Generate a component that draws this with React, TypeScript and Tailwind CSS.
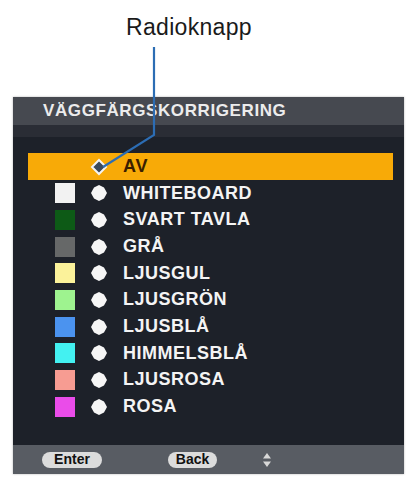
import React from "react";

const rows = [
  { label: "WHITEBOARD", color: "#f2f2f2" },
  { label: "SVART TAVLA", color: "#0d5a16" },
  { label: "GRÅ", color: "#666868" },
  { label: "LJUSGUL", color: "#fbf29a" },
  { label: "LJUSGRÖN", color: "#9ef38f" },
  { label: "LJUSBLÅ", color: "#4b93ef" },
  { label: "HIMMELSBLÅ", color: "#43f1f1" },
  { label: "LJUSROSA", color: "#f79c92" },
  { label: "ROSA", color: "#ea4ce9" },
];

const font = { fontFamily: "'Liberation Sans', Arial, sans-serif" };

function Dot() {
  return (
    <svg width="18" height="18" viewBox="0 0 18 18" className="shrink-0">
      <path d="M9 1 L14 3.5 L17 9 L14 14.5 L9 17 L4 14.5 L1 9 L4 3.5 Z" fill="#f6f6f6" />
    </svg>
  );
}

export default function App() {
  return (
    <div className="relative w-[412px] h-[479px] bg-white overflow-hidden" style={font}>
      <div className="h-[97px] flex justify-center pt-[13px]">
        <div className="ml-[-34px] text-[23px] leading-[28px] text-[#1a1a1a] tracking-[0.3px]">Radioknapp</div>
      </div>
      <div className="ml-[13px] w-[391px] h-[377px] flex flex-col bg-[#1d2129] shadow-[0_0_2px_rgba(0,0,0,0.3)]">
        <div className="h-[28px] bg-[#464950] flex items-center pl-[30px]">
          <span className="text-[17px] font-bold text-[#ececec] tracking-[0.6px]">VÄGGFÄRGSKORRIGERING</span>
        </div>
        <div className="h-[12px] bg-[#2a2d35]" />
        <div className="flex-1 flex flex-col pt-[16px]">
          <div className="ml-[15px] mr-[11px] h-[27px] bg-[#f8aa07] flex items-center">
            <div className="w-[62px]" />
            <svg width="18" height="18" viewBox="0 0 18 18" className="shrink-0">
              <path d="M9 2 L16 9 L9 16 L2 9 Z" fill="#3b4a5c" stroke="#f4f4f4" strokeWidth="2" />
            </svg>
            <span className="ml-[15px] text-[18px] font-bold text-[#3a1e00] tracking-[0.8px]">AV</span>
          </div>
          {rows.map((r) => (
            <div key={r.label} className="ml-[15px] h-[26.67px] flex items-center">
              <div className="w-[27px]" />
              <div className="w-[20px] h-[20px] shrink-0" style={{ background: r.color }} />
              <div className="w-[15px]" />
              <Dot />
              <span className="ml-[15px] text-[18px] font-bold text-[#f4f4f4] tracking-[0.5px]">{r.label}</span>
            </div>
          ))}
        </div>
        <div className="h-[29px] bg-[#585c63] flex items-center">
          <div className="ml-[29px] w-[60px] h-[16px] rounded-full bg-[#dcdcdc] flex items-center justify-center text-[14px] font-bold text-[#111]">Enter</div>
          <div className="ml-[66px] w-[49px] h-[16px] rounded-full bg-[#dcdcdc] flex items-center justify-center text-[14px] font-bold text-[#111]">Back</div>
          <svg width="10" height="16" viewBox="0 0 10 16" className="ml-[45px]">
            <path d="M5 1 L9 6.5 L1 6.5 Z" fill="#d8d8d8" />
            <path d="M5 15 L9 9.5 L1 9.5 Z" fill="#d8d8d8" />
          </svg>
        </div>
      </div>
      <svg className="absolute left-0 top-0 pointer-events-none" width="412" height="479">
        <polyline points="154,47 154,135 103,167" fill="none" stroke="#2c6db4" strokeWidth="2.2" />
      </svg>
    </div>
  );
}
